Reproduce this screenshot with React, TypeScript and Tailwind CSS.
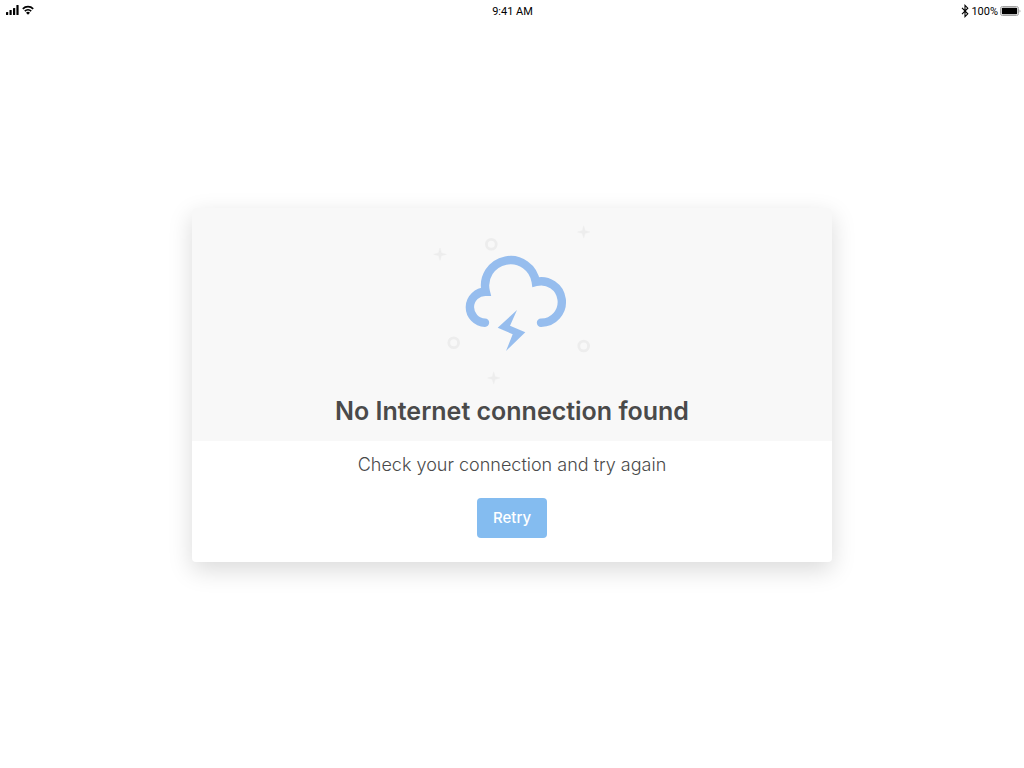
function SignalIcon() {
  return (
    <svg width="13" height="10" viewBox="0 0 13 10" fill="#000" aria-hidden="true">
      <rect x="0" y="7" width="2.2" height="3" rx="0.6" />
      <rect x="3.5" y="5" width="2.2" height="5" rx="0.6" />
      <rect x="7" y="3" width="2.2" height="7" rx="0.6" />
      <rect x="10.4" y="0" width="2.2" height="10" rx="0.6" />
    </svg>
  )
}

function WifiIcon() {
  return (
    <svg width="12" height="10" viewBox="0 0 12 10" fill="none" stroke="#000" strokeWidth="1.7" aria-hidden="true">
      <path d="M0.8 3.8a7.4 7.4 0 0 1 10.4 0" />
      <path d="M2.8 6.1a4.6 4.6 0 0 1 6.4 0" />
      <path d="M6 9.8 4 7.8a2.8 2.8 0 0 1 4 0Z" fill="#000" stroke="none" />
    </svg>
  )
}

function BluetoothIcon() {
  return (
    <svg width="8" height="14" viewBox="0 0 8 14" fill="none" stroke="#000" strokeWidth="1.1" aria-hidden="true">
      <path d="M1 3.8 6.8 9.8 4 12.6V1.4L6.8 4.2 1 10.2" />
    </svg>
  )
}

function BatteryIcon() {
  return (
    <svg width="21" height="10" viewBox="0 0 21 10" aria-hidden="true">
      <rect x="0.5" y="0.5" width="18" height="9" rx="2" fill="none" stroke="#a3a3a3" />
      <rect x="1.8" y="1.8" width="15.4" height="6.4" rx="0.8" fill="#000" />
      <path d="M19.5 3.4c1.3 0.5 1.3 2.7 0 3.2Z" fill="#a3a3a3" />
    </svg>
  )
}

const rings = [
  [491.3, 244.3],
  [453.7, 342.7],
  [583.7, 346],
]

const stars = [
  'M440 248l1.4 4.9 4.9 1.4-4.9 1.4-1.4 4.9-1.4-4.9-4.9-1.4 4.9-1.4Z',
  'M583.7 225.7l1.4 4.9 4.9 1.4-4.9 1.4-1.4 4.9-1.4-4.9-4.9-1.4 4.9-1.4Z',
  'M493.7 371.7l1.4 4.9 4.9 1.4-4.9 1.4-1.4 4.9-1.4-4.9-4.9-1.4 4.9-1.4Z',
]

function StormCloud() {
  return (
    <svg width="176" height="164" viewBox="424 222 176 164" fill="none" aria-hidden="true">
      {rings.map(([cx, cy]) => (
        <circle key={cx} cx={cx} cy={cy} r="4.9" stroke="#ededed" strokeWidth="2.8" />
      ))}
      {stars.map((d) => (
        <path key={d} d={d} fill="#ededed" stroke="#ededed" strokeWidth="0.4" />
      ))}
      <path
        d="M485 322.7A15.5 15.5 0 0 1 485.8 291.7A25.5 25.5 0 1 1 535.8 282A20.7 20.7 0 1 1 541 322.7"
        stroke="#96bdee"
        strokeWidth="8.4"
        strokeLinecap="round"
        strokeLinejoin="miter"
      />
      <path d="M517 310 497.7 327.7 512.7 334.3 506 351 525.3 332.3 510 325.7Z" fill="#96bdee" />
    </svg>
  )
}

export default function App() {
  return (
    <div className="flex min-h-screen flex-col bg-white font-['Inter',sans-serif]">
      {/* Status bar */}
      <header className="grid h-6 grid-cols-3 items-center pr-[3px] pl-1 font-['Roboto',sans-serif] text-[11px] leading-6 text-black">
        <div className="flex items-center gap-[3px] pb-1 pl-[2px]">
          <SignalIcon />
          <WifiIcon />
        </div>
        <time className="text-center">9:41 AM</time>
        <div className="flex items-center justify-end gap-[2px]">
          <div className="pb-[3px]">
            <BluetoothIcon />
          </div>
          <span>100%</span>
          <div className="pb-[3px]">
            <BatteryIcon />
          </div>
        </div>
      </header>

      {/* Message card */}
      <main className="flex flex-1 items-center justify-center px-6 pb-[22px]">
        <section className="w-full max-w-[640px] overflow-hidden rounded bg-white text-center shadow-[0_8px_24px_rgba(0,0,0,0.15)]">
          <div className="flex flex-col items-center bg-[#f8f8f8] px-4 pt-[14px] pb-3">
            <StormCloud />
            <h1 className="mt-2 text-[25px] leading-[35px] font-semibold text-[#4a4a4a]">
              No Internet connection found
            </h1>
          </div>
          <div className="flex flex-col items-center px-4 pt-2 pb-6">
            <p className="text-lg leading-8 font-light text-[#4a4a4a]">
              Check your connection and try again
            </p>
            <button
              type="button"
              className="mt-[17px] h-10 w-[70px] rounded bg-[#84bcf0] text-[15px] font-medium text-white"
            >
              Retry
            </button>
          </div>
        </section>
      </main>
    </div>
  )
}
